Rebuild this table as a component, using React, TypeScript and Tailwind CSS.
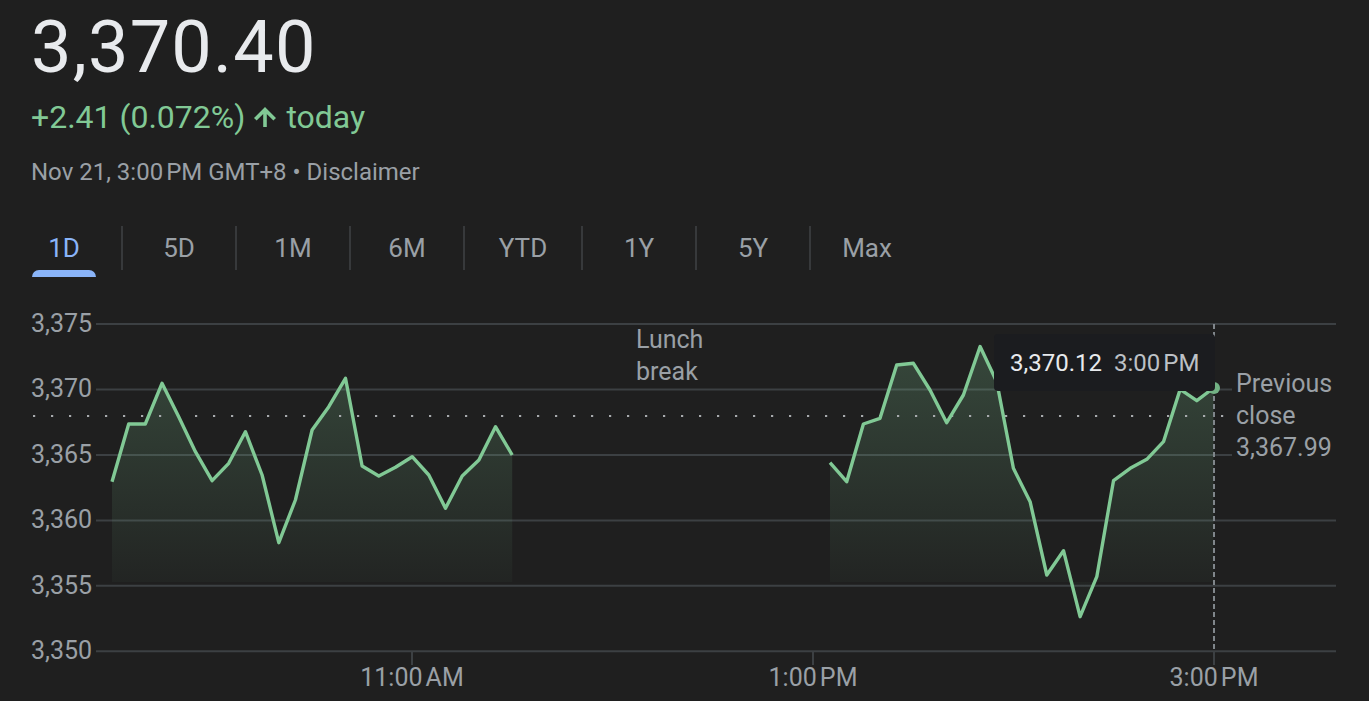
import React from "react";

const leftY = [481.7, 424, 424, 383.3, 416.7, 451.7, 480.7, 463.3, 431.7, 475, 542.7, 500, 430, 406.7, 378.3, 466, 476, 467.3, 456.7, 475, 508.3, 476, 460, 426.7, 455];
const rightY = [462.7, 481.7, 424, 418.3, 365, 363.3, 390, 422.7, 395, 346.5, 382, 468.3, 501.7, 575, 550.7, 616.7, 576.7, 480.7, 468.3, 459.3, 441.7, 389.3, 400.7, 388];

type P = [number, number];
const leftPts: P[] = leftY.map((y, i) => [112 + i * 16.675, y]);
const rightPts: P[] = rightY.map((y, j) => [830 + j * 16.675, y]);

const toLine = (pts: P[]) => pts.map((p, i) => `${i ? "L" : "M"}${p[0].toFixed(1)} ${p[1]}`).join(" ");
const toArea = (pts: P[]) =>
  `${toLine(pts)} L${pts[pts.length - 1][0].toFixed(1)} 582 L${pts[0][0].toFixed(1)} 582 Z`;

const gridYs = [324, 389.5, 455, 520.4, 585.8, 651.2];

function Tab({ label, wide }: { label: string; wide?: boolean }) {
  return (
    <div className={`${wide ? "w-[116px]" : "w-[112px]"} h-[44px] flex items-center justify-center`}>
      {label}
    </div>
  );
}

function Divider() {
  return <div className="w-[2px] h-[44px] bg-[#37393b]" />;
}

export default function App() {
  return (
    <div className="w-[1369px] h-[701px] overflow-hidden bg-[#1f1f1f] font-['Roboto',sans-serif]">
      <div className="h-[290px] pl-[31px] pt-[12px]">
        <div className="text-[72px] leading-[72px] text-[#e8eaed] tracking-[1.2px]">3,370.40</div>
        <div className="mt-[17px] flex items-center text-[32px] leading-[32px] text-[#81c995]">
          <span>+2.41 (0.072%)</span>
          <svg className="ml-[9px] mr-[10px]" width="22" height="20" viewBox="0 0 22 20">
            <path
              fill="#81c995"
              d="M11 0 L22 11 L19.4 13.6 L12.8 7 V20 H9.2 V7 L2.6 13.6 L0 11 Z"
            />
          </svg>
          <span>today</span>
        </div>
        <div className="mt-[27px] text-[24px] leading-[24px] text-[#9aa0a6]">
          Nov 21, 3:00{"\u202f"}PM GMT+8 • Disclaimer
        </div>
        <div className="mt-[42px] ml-[1px] flex items-start text-[26px] text-[#9aa0a6]">
          <div className="w-[89px] flex flex-col">
            <div className="w-16 h-[44px] flex items-center justify-center text-[#8ab4f8]">1D</div>
            <div className="w-16 h-[7px] rounded-t-[7px] bg-[#8ab4f8]" />
          </div>
          <Divider />
          <Tab label="5D" />
          <Divider />
          <Tab label="1M" />
          <Divider />
          <Tab label="6M" />
          <Divider />
          <Tab label="YTD" wide />
          <Divider />
          <Tab label="1Y" />
          <Divider />
          <Tab label="5Y" />
          <Divider />
          <Tab label="Max" />
        </div>
      </div>

      <div className="relative h-[411px] text-[25px] leading-8 text-[#9aa0a6]">
        <svg className="absolute inset-0" width="1369" height="411" viewBox="0 290 1369 411">
          <defs>
            <linearGradient id="fillg" gradientUnits="userSpaceOnUse" x1="0" y1="345" x2="0" y2="585">
              <stop offset="0" stopColor="#81c995" stopOpacity="0.24" />
              <stop offset="1" stopColor="#81c995" stopOpacity="0.03" />
            </linearGradient>
          </defs>
          {gridYs.map((y) => (
            <line key={y} x1="96" x2="1336" y1={y} y2={y} stroke="#3c4043" strokeWidth="2" />
          ))}
          {[412, 813, 1214].map((x) => (
            <line key={x} x1={x} x2={x} y1="651" y2="665" stroke="#3c4043" strokeWidth="2" />
          ))}
          <path d={toArea(leftPts)} fill="url(#fillg)" />
          <path d={toArea(rightPts)} fill="url(#fillg)" />
          <line x1="33" x2="1230" y1="416" y2="416" stroke="#a8abae" strokeWidth="2.2" strokeDasharray="2.2 15.8" />
          <line x1="1214" x2="1214" y1="324" y2="651" stroke="#80868b" strokeWidth="2" strokeDasharray="5 3" />
          <path d={toLine(leftPts)} fill="none" stroke="#81c995" strokeWidth="3.4" strokeLinejoin="round" />
          <path d={toLine(rightPts)} fill="none" stroke="#81c995" strokeWidth="3.4" strokeLinejoin="round" />
          <circle cx="1214" cy="388" r="6" fill="#72b284" />
        </svg>

        <div className="absolute left-[31px] top-[18px] flex flex-col gap-[33.4px]">
          <div>3,375</div>
          <div>3,370</div>
          <div>3,365</div>
          <div>3,360</div>
          <div>3,355</div>
          <div>3,350</div>
        </div>

        <div className="absolute left-[636px] top-[34px]">
          <div>Lunch</div>
          <div>break</div>
        </div>

        <div className="absolute left-[1232px] top-[78px] w-[110px] pl-[4px] bg-[#1f1f1f]">
          <div>Previous</div>
          <div>close</div>
          <div>3,367.99</div>
        </div>

        <div className="absolute left-[994px] top-[44px] w-[221px] h-[57px] rounded-[4px] bg-[#1b1c1f] flex items-center pl-[16px] gap-[12px] text-[24px] leading-6">
          <span className="text-[#e8eaed]">3,370.12</span>
          <span className="text-[#bdc1c6]">3:00{"\u202f"}PM</span>
        </div>

        <div className="absolute left-[412px] top-[372px] -translate-x-1/2 whitespace-nowrap">11:00{"\u202f"}AM</div>
        <div className="absolute left-[813px] top-[372px] -translate-x-1/2 whitespace-nowrap">1:00{"\u202f"}PM</div>
        <div className="absolute left-[1214px] top-[372px] -translate-x-1/2 whitespace-nowrap">3:00{"\u202f"}PM</div>
      </div>
    </div>
  );
}
